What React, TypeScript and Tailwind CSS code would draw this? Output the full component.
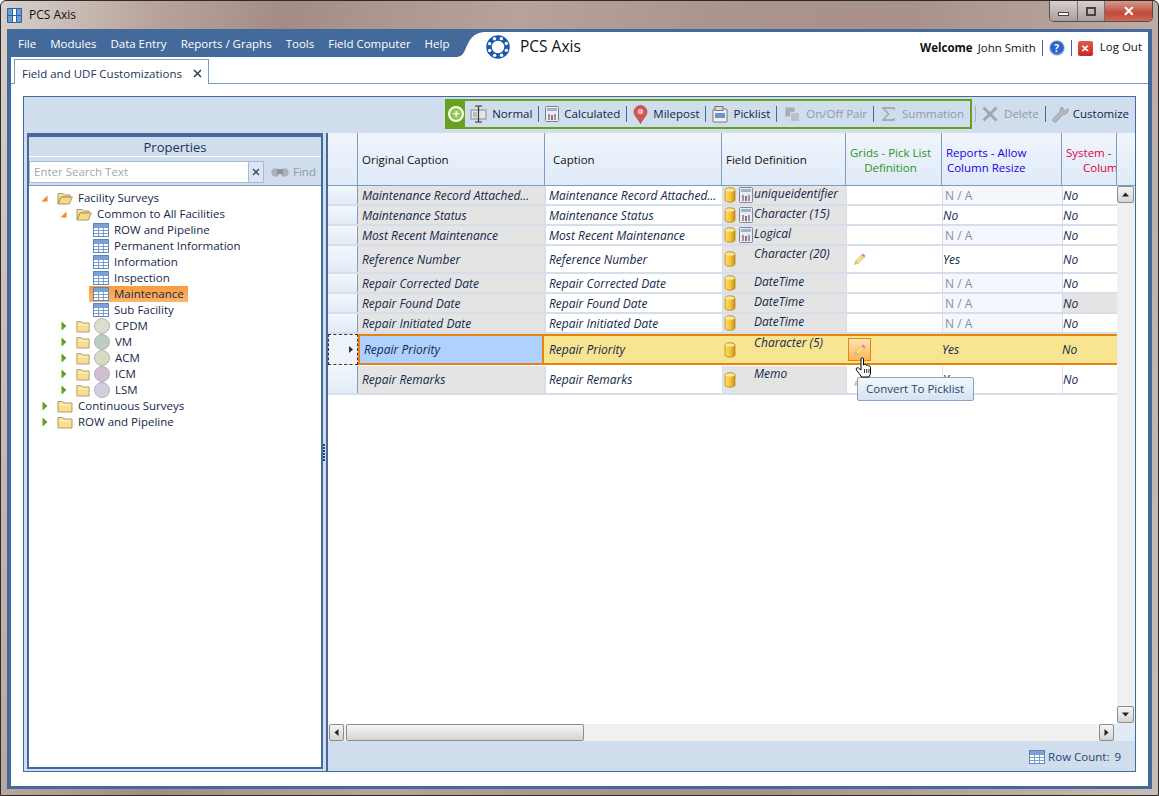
// App.tsx
const ui = "font-['Open_Sans','Noto_Sans',sans-serif]";

function Can() {
  return (
    <svg width="12" height="16" viewBox="0 0 12 16" className="shrink-0">
      <defs>
        <linearGradient id="can" x1="0" x2="1" y1="0" y2="0">
          <stop offset="0" stopColor="#f9d96a" />
          <stop offset="0.5" stopColor="#f5c93c" />
          <stop offset="1" stopColor="#c98f14" />
        </linearGradient>
      </defs>
      <path d="M1 3c0-3 10-3 10 0v10c0 3-10 3-10 0z" fill="url(#can)" stroke="#b98a2a" strokeWidth="0.8" />
      <ellipse cx="6" cy="3" rx="4.600" ry="1.600" fill="#fbe9a4" />
    </svg>
  );
}

function Calc() {
  return (
    <svg width="14" height="16" viewBox="0 0 14 16" className="shrink-0">
      <rect x="0.500" y="0.500" width="13" height="15" rx="1" fill="#e9edf3" stroke="#7f8794" />
      <rect x="2" y="2" width="10" height="3" fill="#9fb3cf" />
      <rect x="3" y="8" width="2" height="6" fill="#8a9ab0" />
      <rect x="6" y="9" width="2" height="5" fill="#c86060" />
      <rect x="9" y="8" width="2" height="6" fill="#8a9ab0" />
    </svg>
  );
}

function Pencil() {
  return (
    <svg width="12" height="12" viewBox="0 0 12 12">
      <path d="M9 0.500l2.500 2.500-1.500 1.500L7.500 2z" fill="#e070d8" />
      <path d="M7.500 2l2.500 2.500-6 6L1.500 8z" fill="#f6e27e" stroke="#c2a442" strokeWidth="0.500" />
      <path d="M1.500 8L4 10.500 0.500 11.500z" fill="#e9d4ac" stroke="#b08c58" strokeWidth="0.400" />
    </svg>
  );
}

function Folder({ open = false, w = 16 }: { open?: boolean; w?: number }) {
  return (
    <svg width={w} height="14" viewBox="0 0 16 14" preserveAspectRatio="none" className="shrink-0">
      {open ? (
        <>
          <path d="M1 2.500h5l1.500 1.500H13v2H4L1 12.500z" fill="#f3e2b4" stroke="#a98a4c" strokeWidth="0.900" />
          <path d="M4 6h11.300l-3 7H1z" fill="#f7d98c" stroke="#a98a4c" strokeWidth="0.900" />
        </>
      ) : (
        <>
          <path d="M1 2.500h5l1.200 1.500H15v9H1z" fill="#f8dd92" stroke="#b0925a" strokeWidth="0.900" />
          <path d="M2 5h12v1.400H2z" fill="#fdf0c6" />
        </>
      )}
    </svg>
  );
}

function TableIcon() {
  return (
    <svg width="16" height="14" viewBox="0 0 16 14" className="shrink-0">
      <rect x="0.500" y="0.500" width="15" height="13" fill="#fff" stroke="#5f86b8" />
      <rect x="1" y="1" width="14" height="3" fill="#77a3dc" />
      <path d="M1 4.500h14M1 7.500h14M1 10.500h14M5.500 1v12M10.500 1v12" stroke="#7d9fcb" strokeWidth="1" />
    </svg>
  );
}

function Arrow({ open }: { open: boolean }) {
  return open ? (
    <svg width="7" height="7" viewBox="0 0 7 7" className="shrink-0">
      <path d="M6.500 0.500v6h-6z" fill="#f08a28" />
    </svg>
  ) : (
    <svg width="6" height="10" viewBox="0 0 6 10" className="shrink-0">
      <path d="M0.500 0.500l5 4.500-5 4.500z" fill="#5fa020" />
    </svg>
  );
}

type Node = {
  label: string;
  kind: "open" | "closed" | "table" | "circle";
  top?: boolean;
  circle?: string;
  selected?: boolean;
};

const tree: Node[] = [
  { label: "Facility Surveys", kind: "open", top: true },
  { label: "Common to All Facilities", kind: "open" },
  { label: "ROW and Pipeline", kind: "table" },
  { label: "Permanent Information", kind: "table" },
  { label: "Information", kind: "table" },
  { label: "Inspection", kind: "table" },
  { label: "Maintenance", kind: "table", selected: true },
  { label: "Sub Facility", kind: "table" },
  { label: "CPDM", kind: "circle", circle: "bg-[#dcddcf]" },
  { label: "VM", kind: "circle", circle: "bg-[#bccdbf]" },
  { label: "ACM", kind: "circle", circle: "bg-[#d8dbc2]" },
  { label: "ICM", kind: "circle", circle: "bg-[#cfbfd0]" },
  { label: "LSM", kind: "circle", circle: "bg-[#cfcfe0]" },
  { label: "Continuous Surveys", kind: "closed", top: true },
  { label: "ROW and Pipeline", kind: "closed", top: true },
];

function TreeRow({ n }: { n: Node }) {
  if (n.kind === "table") {
    return (
      <div className="h-4 flex items-center">
        <div
          className={
            "flex items-center h-4 pl-[4px] ml-[60px] w-[99px] " +
            (n.selected ? "bg-[linear-gradient(#fb9a3c,#fdb76a)]" : "")
          }
        >
          <TableIcon />
          <span className="ml-[5px] whitespace-nowrap">{n.label}</span>
        </div>
      </div>
    );
  }
  if (n.kind === "circle") {
    return (
      <div className="h-4 flex items-center pl-[31px]">
        <span className="w-[7px] mr-[9px] flex justify-center"><Arrow open={false} /></span>
        <Folder w={14} />
        <span className={"w-4 h-4 rounded-full border border-[#b5b5b5] ml-[4px] mr-[5px] " + n.circle} />
        <span>{n.label}</span>
      </div>
    );
  }
  return (
    <div className={"h-4 flex items-center " + (n.top ? "pl-[12px]" : "pl-[31px]")}>
      <span className="w-[7px] mr-[9px] flex justify-center"><Arrow open={n.kind === "open"} /></span>
      <Folder open={n.kind === "open"} />
      <span className="ml-[5px] whitespace-nowrap">{n.label}</span>
    </div>
  );
}

type Row = {
  name: string;
  type: string;
  h: string;
  calc?: boolean;
  pencil?: boolean;
  rep: string;
  sysGray?: boolean;
};

const rows: Row[] = [
  { name: "Maintenance Record Attached...", type: "uniqueidentifier", h: "h-[20px]", calc: true, rep: "N / A" },
  { name: "Maintenance Status", type: "Character (15)", h: "h-[20px]", calc: true, rep: "No" },
  { name: "Most Recent Maintenance", type: "Logical", h: "h-[20px]", calc: true, rep: "N / A" },
  { name: "Reference Number", type: "Character (20)", h: "h-[28px]", pencil: true, rep: "Yes" },
  { name: "Repair Corrected Date", type: "DateTime", h: "h-[20px]", rep: "N / A" },
  { name: "Repair Found Date", type: "DateTime", h: "h-[20px]", rep: "N / A", sysGray: true },
  { name: "Repair Initiated Date", type: "DateTime", h: "h-[20px]", rep: "N / A" },
];

function DataRow({ r }: { r: Row }) {
  const na = r.rep === "N / A";
  return (
    <div className={"flex italic shrink-0 text-[12px] border-b-2 border-[#d5deea] " + r.h}>
      <div className="w-[30px] border-r border-[#7f9cc0] bg-[linear-gradient(#f4f8fd,#e1eaf6)]" />
      <div className="w-[186px] bg-[#e4e4e4] pl-[4px] pt-[1px] flex items-center whitespace-nowrap">{r.name}</div>
      <div className="w-[178px] bg-white pl-[3px] pt-[1px] flex items-center whitespace-nowrap border-l-2 border-[#d5deea]">{r.name}</div>
      <div className="w-[124px] bg-[#e4e4e4] flex border-l border-[#d5deea] overflow-hidden">
        <div className="pl-[1px] w-[31px] flex items-center shrink-0 gap-[3px]">
          <Can />
          {r.calc ? <Calc /> : null}
        </div>
        <span className="whitespace-nowrap leading-[16px]">{r.type}</span>
      </div>
      <div className="w-[96px] bg-white border-l border-[#d5deea] flex items-center pl-[7px]">{r.pencil ? <Pencil /> : null}</div>
      <div className={"w-[120px] border-l border-[#d5deea] pt-[1px] flex items-center " + (na ? "bg-[#f5f7fc] not-italic text-[#85909e] font-medium pl-[2px]" : "bg-white")}>{r.rep}</div>
      <div className={"w-[55px] border-l border-[#d5deea] pt-[1px] flex items-center " + (r.sysGray ? "bg-[#e4e4e4]" : "bg-white")}>No</div>
    </div>
  );
}

function ToolItem({ icon, label, off, sep = true, gap = "gap-[5px]", pre = "" }: { icon: React.ReactNode; label: string; off?: boolean; sep?: boolean; gap?: string; pre?: string }) {
  return (
    <>
      <span className={"flex items-center " + gap + " " + pre}>
        {icon}
        <span className={"font-medium whitespace-nowrap " + (off ? "text-[#8f9aa9]" : "text-[#12264a]")}>{label}</span>
      </span>
      {sep ? <span className="w-[1px] h-[16px] bg-[#44699b] mx-[6px]" /> : null}
    </>
  );
}

const IconNormal = (
  <svg width="17" height="18" viewBox="0 0 17 18">
    <rect x="1" y="5" width="15" height="9" fill="#e2e4e8" stroke="#8b8b8b" />
    <rect x="3" y="7" width="4" height="5" fill="#b9bcc2" />
    <path d="M5 1h7M8.500 1v16M5 17h7" stroke="#333" strokeWidth="1.200" fill="none" />
  </svg>
);

const IconPin = (
  <svg width="15" height="19" viewBox="0 0 15 19">
    <path d="M7.500 18.500C5 13.500 1 10.500 1 7a6.500 6.500 0 0113 0c0 3.500-4 6.500-6.500 11.500z" fill="#d4545a" stroke="#a04a4a" strokeWidth="0.700" />
    <circle cx="7.500" cy="6.500" r="2.800" fill="#eeb7b7" />
  </svg>
);

const IconPicklist = (
  <svg width="16" height="17" viewBox="0 0 16 17">
    <rect x="1" y="3" width="14" height="13" rx="1" fill="#eef1f5" stroke="#777" />
    <rect x="3" y="0.500" width="8" height="4" fill="#d6dae0" stroke="#777" />
    <rect x="3" y="7" width="10" height="5" fill="#6f95cc" />
  </svg>
);

const IconOnOff = (
  <svg width="15" height="15" viewBox="0 0 15 15">
    <rect x="0.500" y="0.500" width="9" height="9" fill="#a8adb3" />
    <rect x="5.500" y="5.500" width="9" height="9" fill="#bcc1c6" stroke="#d0dded" />
  </svg>
);

const IconSum = (
  <svg width="13" height="14" viewBox="0 0 13 14">
    <path d="M12 3V1H1l5.500 6L1 13h11v-2" fill="none" stroke="#a6adb6" strokeWidth="1.800" />
  </svg>
);

const IconDelete = (
  <svg width="16" height="16" viewBox="0 0 16 16">
    <path d="M1.500 1.500l13 13M14.500 1.500l-13 13" stroke="#a2a7ad" strokeWidth="3" />
  </svg>
);

const IconWrench = (
  <svg width="17" height="17" viewBox="0 0 17 17">
    <path d="M16 2.500l-3 2.500-2-1 0-2.500C9 1 7.500 3 8 5.500L1 13c-1 2 1 3.500 3 3l7-7.500c2.500 .5 4.500-1 5-4z" fill="#b4b8bd" stroke="#83888d" strokeWidth="0.600" />
  </svg>
);

function ScrollBtn({ d, className }: { d: string; className: string }) {
  return (
    <div className={"border border-[#8c8c8c] rounded-[2px] bg-[linear-gradient(#f6f6f6,#d4d4d4)] flex items-center justify-center " + className}>
      <svg width="7" height="7" viewBox="0 0 7 7">
        <path d={d} fill="#222" />
      </svg>
    </div>
  );
}

export default function App() {
  return (
    <div className={"w-[1159px] h-[796px] relative overflow-hidden flex flex-col rounded-t-[6px] border border-[#2b2b2b] text-[11.5px] text-[#15284b] bg-[linear-gradient(100deg,#d8d0cb_0%,#b8a39c_12%,#a48c85_22%,#b7a39c_40%,#ab948d_55%,#a99189_70%,#b8a59e_85%,#c9bdb8_100%)] " + ui}>
      {/* title bar */}
      <div className="h-[28px] shrink-0 flex items-center pl-[6px] relative">
        <div className="w-[15px] h-[15px] bg-[#2a62a8] rounded-[1px] grid grid-cols-3 gap-[1px] p-[1px] mr-[7px]">
          {[0, 1, 2, 3, 4, 5].map((i) => (
            <span key={i} className={i === 1 || i === 4 ? "bg-white" : "bg-[#6f9ad0]"} />
          ))}
        </div>
        <span className="text-[#111] text-[12px]">PCS Axis</span>
        <div className="absolute top-0 right-[5px] flex h-[21px] rounded-b-[5px] border border-t-0 border-[#4f4f4f] overflow-hidden">
          <div className="w-[28px] bg-[linear-gradient(#d9d0cc,#a8a09c)] border-r border-[#6f6f6f] flex items-center justify-center">
            <span className="w-[11px] h-[4px] bg-white border border-[#444] mt-[5px]" />
          </div>
          <div className="w-[27px] bg-[linear-gradient(#d9d0cc,#a8a09c)] border-r border-[#6f6f6f] flex items-center justify-center">
            <span className="w-[10px] h-[9px] bg-transparent border-2 border-[#444]" />
          </div>
          <div className="w-[47px] bg-[linear-gradient(#d69a8e,#c04a3a_60%,#cf6a55)] flex items-center justify-center text-white font-bold text-[14px] leading-none">✕</div>
        </div>
      </div>

      {/* window body */}
      <div className="mx-[6px] mb-[6px] h-[760px] border-x-[4px] border-y-[3px] border-[#44699b] bg-white flex flex-col">
        {/* menu + user */}
        <div className="h-[25px] shrink-0 flex relative">
          <div className="w-[445px] bg-[#44699b] text-white text-[11.5px] flex items-center pl-[7px] gap-[14px] pb-[1px]">
            {["File", "Modules", "Data Entry", "Reports / Graphs", "Tools", "Field Computer", "Help"].map((m) => (
              <span key={m} className="whitespace-nowrap">{m}</span>
            ))}
          </div>
          <svg width="28" height="25" viewBox="0 0 28 25" className="shrink-0">
            <path d="M0 0h28C16 1 13 9 9 18c-2 5-5 7-9 7z" fill="#44699b" />
          </svg>
          <div className="flex items-center ml-[1px] mt-[3px] h-[24px]">
            <svg width="26" height="26" viewBox="0 0 26 26">
              <circle cx="13" cy="13" r="9" fill="none" stroke="#1b57ad" strokeWidth="5.500" />
              {[0, 45, 90, 135, 180, 225, 270, 315].map((a) => (
                <circle key={a} cx={13 + 9 * Math.cos(((a + 22) * Math.PI) / 180)} cy={13 + 9 * Math.sin(((a + 22) * Math.PI) / 180)} r="1.700" fill="#fff" />
              ))}
            </svg>
            <span className="ml-[9px] text-[15.5px] text-[#111]">PCS Axis</span>
          </div>
          <div className="ml-auto flex items-center pr-[6px] mt-[5px] h-[22px] text-[#111]">
            <span className="font-bold">Welcome</span>
            <span className="ml-[5px]">John Smith</span>
            <span className="w-[1px] h-[16px] bg-[#44699b] mx-[6px]" />
            <span className="w-[16px] h-[16px] rounded-full border border-[#c3cedd] bg-[radial-gradient(circle_at_50%_40%,#2f62c8_55%,#a9bfe4)] text-white text-[10px] font-bold flex items-center justify-center">?</span>
            <span className="w-[1px] h-[16px] bg-[#44699b] mx-[6px]" />
            <span className="w-[15px] h-[15px] rounded-[2px] bg-[linear-gradient(#e55a4d,#c52a22)] text-white text-[10px] font-bold flex items-center justify-center">✕</span>
            <span className="ml-[7px] -mt-[2px]">Log Out</span>
          </div>
        </div>

        {/* tab strip */}
        <div className="h-[27px] shrink-0 flex items-end border-b border-[#7f9cc0] pl-[3px]">
          <div className="h-[25px] w-[195px] -mb-[1px] bg-white border border-b-0 border-[#7f9cc0] flex items-center pl-[7px] pt-[3px] text-[#1d3557]">
            <span className="whitespace-nowrap">Field and UDF Customizations</span>
            <svg width="9" height="9" viewBox="0 0 9 9" className="ml-auto mr-[6px]">
              <path d="M1 1l7 7M8 1L1 8" stroke="#2b3f5c" strokeWidth="1.500" />
            </svg>
          </div>
        </div>

        {/* content panel */}
        <div className="mt-[12px] ml-[12px] w-[1113px] h-[676px] border border-[#44699b] bg-[#d0dded] flex flex-col">
          {/* toolbar */}
          <div className="h-[36px] shrink-0 flex items-center justify-end pr-[6px] pb-[2px]">
            <div className="flex items-center h-[30px] border-2 border-[#67a11f] pr-[6px]">
              <div className="w-[18px] h-full bg-[#67a11f] flex items-center justify-center mr-[5px]">
                <span className="w-[16px] h-[16px] rounded-full bg-[#8ccb50] border-2 border-white text-white font-bold flex items-center justify-center text-[12px] leading-none">+</span>
              </div>
              <ToolItem icon={IconNormal} label="Normal" />
              <ToolItem icon={<Calc />} label="Calculated" />
              <ToolItem icon={IconPin} label="Milepost" />
              <ToolItem icon={IconPicklist} label="Picklist" />
              <ToolItem icon={IconOnOff} label="On/Off Pair" off pre="ml-[2px]" gap="gap-[6px]" />
              <ToolItem icon={IconSum} label="Summation" off sep={false} pre="ml-[2px]" gap="gap-[7px]" />
            </div>
            <span className="w-[1px] h-[16px] bg-[#9fb4cf] mx-[3px]" />
            <span className="w-[3px]" />
            <ToolItem icon={IconDelete} label="Delete" off gap="gap-[6px]" />
            <ToolItem icon={IconWrench} label="Customize" sep={false} gap="gap-[4px]" />
          </div>

          <div className="flex-1 flex min-h-0 pl-[3px]">
            {/* properties */}
            <div className="w-[296px] h-[636px] border-[2px] border-t-[4px] border-[#44699b] flex flex-col bg-white">
              <div className="h-[20px] shrink-0 bg-[#d0dded] border-b border-white pt-[2px] flex items-center justify-center text-[13px] font-medium text-[#1d3557]">Properties</div>
              <div className="h-[28px] shrink-0 bg-[#d0dded] flex items-center pt-[1px]">
                <div className="w-[220px] h-[22px] border border-[#a6bdd8] bg-white flex items-center pl-[4px] text-[#a0a8b2]">Enter Search Text</div>
                <div className="w-[15px] h-[22px] border border-l-0 border-[#a6bdd8] bg-[#dde6f2] flex items-center justify-center">
                  <svg width="8" height="8" viewBox="0 0 8 8"><path d="M1 1l6 6M7 1L1 7" stroke="#3b4d66" strokeWidth="1.500" /></svg>
                </div>
                <svg width="18" height="12" viewBox="0 0 18 12" className="ml-[7px]">
                  <circle cx="4.500" cy="6.500" r="4.200" fill="#aab0b8" />
                  <circle cx="13.500" cy="6.500" r="4.200" fill="#aab0b8" />
                  <rect x="6" y="3" width="6" height="5" fill="#8f959d" />
                </svg>
                <span className="ml-[4px] font-medium text-[#8f9aa9]">Find</span>
              </div>
              <div className="flex-1 pt-[4px] border-t border-[#7f9cc0] text-[#15284b]">
                {tree.map((n, i) => (
                  <TreeRow key={i} n={n} />
                ))}
              </div>
            </div>

            {/* splitter */}
            <div className="w-[3px] flex flex-col items-start justify-center gap-[1px]">
              {[0, 1, 2, 3, 4, 5].map((i) => (
                <span key={i} className="w-[2px] h-[2px] bg-[#26456f]" />
              ))}
            </div>

            {/* grid */}
            <div className="w-[809px] h-[638px] flex flex-col border-l-2 border-[#44699b]">
              <div className="flex-1 min-h-0 flex flex-col bg-white">
                {/* header */}
                <div className="h-[53px] shrink-0 flex border-b border-[#7f9cc0] bg-[linear-gradient(#f0f5fc,#dfeaf8)] text-center">
                  <div className="w-[30px] border-r border-[#7f9cc0]" />
                  <div className="w-[187px] border-r border-[#7f9cc0] flex items-center pl-[4px] pt-[1px] text-[#111]">Original Caption</div>
                  <div className="w-[177px] border-r border-[#7f9cc0] flex items-center pl-[8px] pt-[1px] text-[#111]">Caption</div>
                  <div className="w-[124px] border-r border-[#7f9cc0] flex items-center pl-[4px] pt-[1px] text-[#111]">Field Definition</div>
                  <div className="w-[96px] border-r border-[#7f9cc0] flex items-center pl-[4px] pt-[2px] text-[#2f9415] leading-[15px]">
                    <span className="text-center">Grids - Pick List<br />Definition</span>
                  </div>
                  <div className="w-[120px] border-r border-[#7f9cc0] flex items-center pl-[4px] pt-[2px] text-[#1800e0] leading-[15px]">
                    <span className="text-center">Reports - Allow<br />Column Resize</span>
                  </div>
                  <div className="w-[55px] border-r border-[#7f9cc0] overflow-hidden flex items-center pl-[4px] pt-[2px] text-[#e0003c] leading-[15px] whitespace-nowrap text-left">
                    <span>System -<br /><span className="pl-[17px]">Colum</span></span>
                  </div>
                  <div className="flex-1" />
                </div>

                <div className="flex-1 min-h-0 flex">
                  <div className="w-[789px] flex flex-col">
                    {rows.map((r) => (
                      <DataRow key={r.name} r={r} />
                    ))}

                    {/* selected row */}
                    <div className="flex italic text-[12px] h-[31px] mb-[1px] shrink-0">
                      <div className="w-[30px] border border-dashed border-[#333] bg-[#eef3fa] flex items-center justify-end pr-[4px] not-italic">
                        <svg width="4" height="7" viewBox="0 0 4 7"><path d="M0 0l4 3.500L0 7z" fill="#1d3557" /></svg>
                      </div>
                      <div className="w-[186px] bg-[#aed1ff] border-[2px] border-[#e8830f] pl-[4px] flex items-center">Repair Priority</div>
                      <div className="w-[573px] flex bg-[#f8e592] border-y-[2px] border-[#e8830f]">
                        <div className="w-[178px] pl-[5px] flex items-center">Repair Priority</div>
                        <div className="w-[124px] flex">
                          <div className="pl-[2px] w-[32px] flex items-center"><Can /></div>
                          <span className="leading-[16px] -mt-[1px]">Character (5)</span>
                        </div>
                        <div className="w-[96px] flex items-center pl-[2px]">
                          <div className="w-[23px] h-[23px] border border-[#e8830f] bg-[linear-gradient(#fbe7b0,#fdb45c)] flex items-center justify-center"><Pencil /></div>
                        </div>
                        <div className="w-[120px] flex items-center">Yes</div>
                        <div className="w-[55px] flex items-center">No</div>
                      </div>
                    </div>

                    {/* last row */}
                    <DataRow r={{ name: "Repair Remarks", type: "Memo", h: "h-[29px]", pencil: true, rep: "Yes" }} />
                  </div>

                  {/* vertical scrollbar */}
                  <div className="w-[18px] bg-[#f0f0f0] flex flex-col justify-between pb-[1px]">
                    <ScrollBtn d="M3.500 1.500L7 5.500H0z" className="h-[17px] w-[17px]" />
                    <ScrollBtn d="M0 1.500h7L3.500 5.500z" className="h-[17px] w-[17px]" />
                  </div>
                </div>

                {/* horizontal scrollbar */}
                <div className="h-[17px] shrink-0 flex items-center bg-[#f0f0f0] pl-[1px]">
                  <ScrollBtn d="M1.500 3.500L5.500 0v7z" className="w-[15px] h-[17px]" />
                  <div className="w-[238px] h-[17px] border border-[#8c8c8c] rounded-[2px] bg-[linear-gradient(#f6f6f6,#d4d4d4)] ml-[2px]" />
                  <ScrollBtn d="M1.500 0l4 3.500-4 3.500z" className="w-[15px] h-[17px] ml-[515px]" />
                  <div className="flex-1 h-full bg-[#e1ebf7]" />
                </div>
              </div>

              {/* footer */}
              <div className="h-[30px] shrink-0 flex items-center justify-end pr-[14px] pt-[1px] text-[#26456f]">
                <TableIcon />
                <span className="ml-[3px]">Row Count:</span>
                <span className="ml-[5px]">9</span>
              </div>
            </div>
          </div>
        </div>
      </div>

      {/* tooltip and hand cursor, over the grid */}
      <div className="absolute left-[856px] top-[376px] w-[117px] h-[24px] border border-[#8aa4c5] rounded-[2px] bg-[linear-gradient(#f3f7fc,#d6e3f3)] flex items-center pl-[8px] text-[#26456f] whitespace-nowrap">Convert To Picklist</div>
      <svg width="17" height="22" viewBox="0 0 17 22" className="absolute left-[854px] top-[356px]">
        <path d="M6 2c0-1.500 2.500-1.500 2.500 0v6l1-.5c1-.3 1.800.2 2 .8 1-.4 1.800 0 2 .7 1-.3 2 .2 2 1.300V16c0 1.500-1 2.500-1.500 4H6.500C5 17 3 15.500 1.500 13c-1-1.500.5-3 2-2L6 13z" fill="#fff" stroke="#000" strokeWidth="1" />
        <path d="M9.500 12v4M11.700 12v4M13.900 12v4" stroke="#000" strokeWidth="0.800" />
      </svg>
    </div>
  );
}
